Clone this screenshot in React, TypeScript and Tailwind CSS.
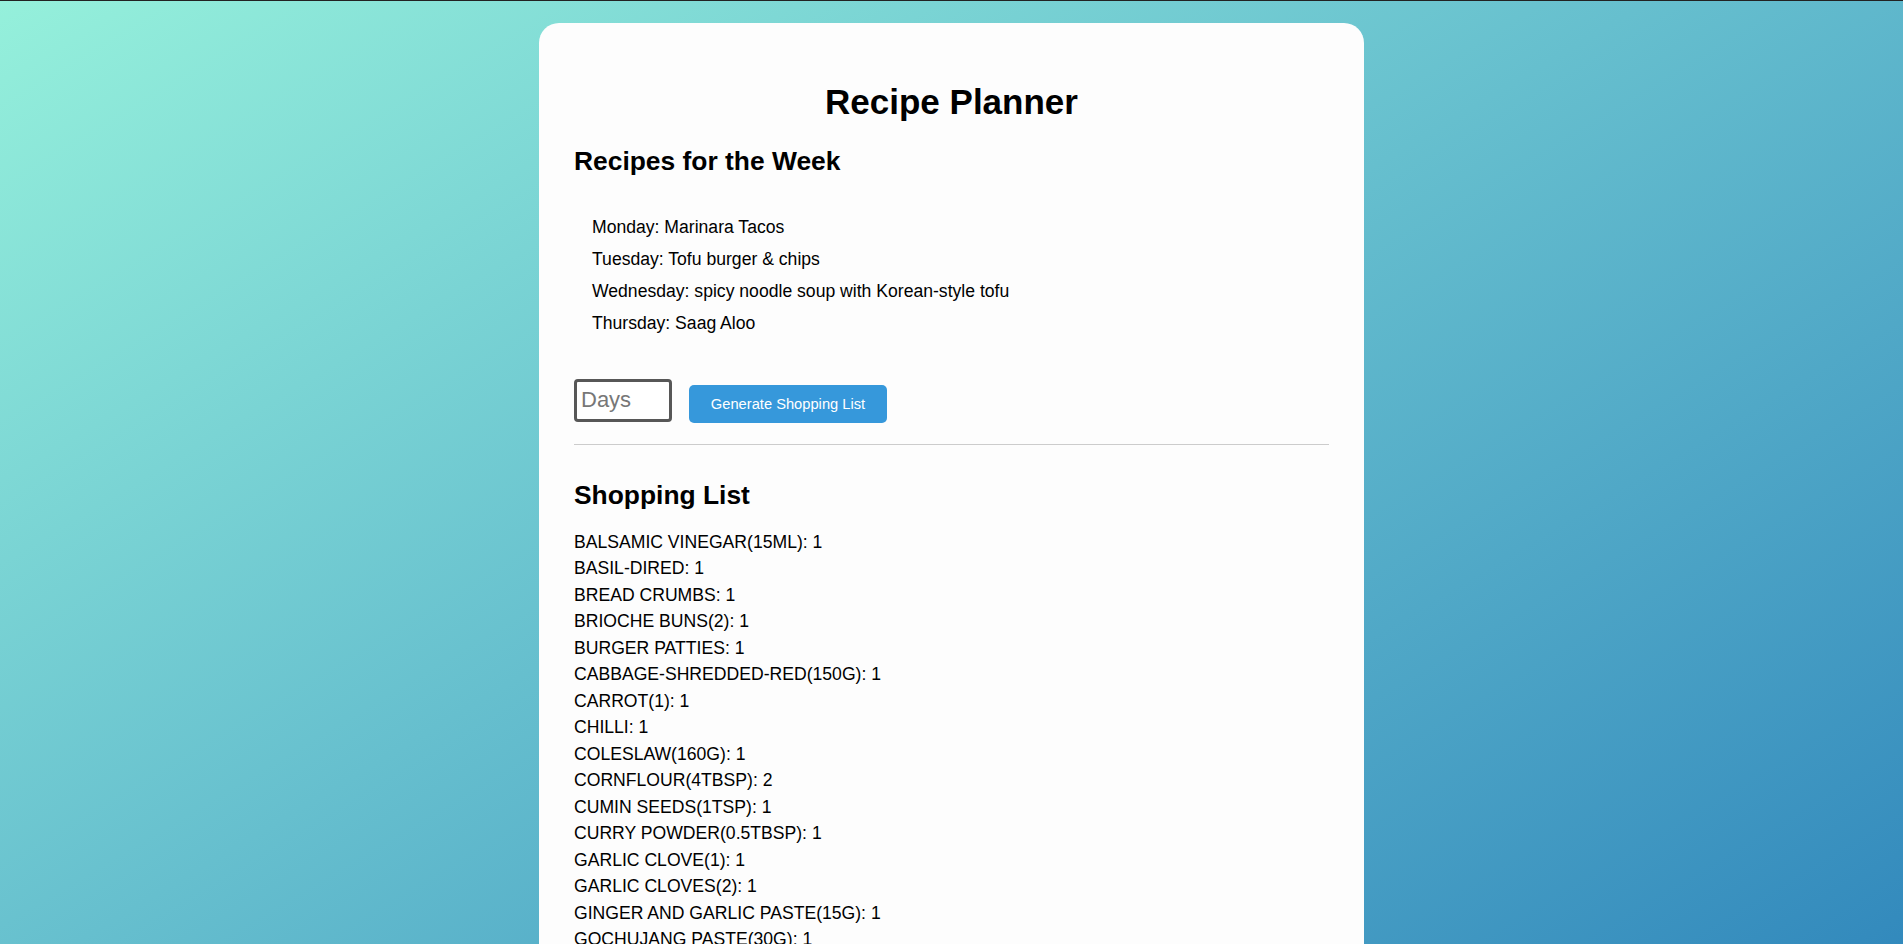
const recipes = [
  "Monday: Marinara Tacos",
  "Tuesday: Tofu burger & chips",
  "Wednesday: spicy noodle soup with Korean-style tofu",
  "Thursday: Saag Aloo",
];

const shopping: [string, number][] = [
  ["balsamic vinegar(15ml)", 1],
  ["basil-dired", 1],
  ["bread crumbs", 1],
  ["brioche buns(2)", 1],
  ["burger patties", 1],
  ["cabbage-shredded-red(150g)", 1],
  ["carrot(1)", 1],
  ["chilli", 1],
  ["coleslaw(160g)", 1],
  ["cornflour(4tbsp)", 2],
  ["cumin seeds(1tsp)", 1],
  ["curry powder(0.5tbsp)", 1],
  ["garlic clove(1)", 1],
  ["garlic cloves(2)", 1],
  ["ginger and garlic paste(15g)", 1],
  ["gochujang paste(30g)", 1],
  ["kale(100g)", 1],
  ["lime(1)", 1],
  ["marinara sauce", 1],
  ["noodles(2 nests)", 1],
];

export default function App() {
  return (
    <div
      className="min-h-[944px] border-t border-[#222] bg-gradient-to-br from-[#95f0db] to-[#2980b9] pt-[22px] pb-10 text-black"
      style={{ fontFamily: '"Liberation Sans", Arial, sans-serif' }}
    >
      <div className="mx-auto w-[825px] rounded-[20px] bg-[#fdfdfd] px-[35px] pt-[59px] pb-10">
        <h1 className="text-center text-[35px] font-bold leading-[1.15]">Recipe Planner</h1>

        <h2 className="mt-[24px] text-[26.4px] font-bold leading-[1.15]">Recipes for the Week</h2>
        <ul className="mt-[34px] pl-[18px] text-[17.6px]">
          {recipes.map((r) => (
            <li key={r} className="leading-[32px]">
              {r}
            </li>
          ))}
        </ul>

        <div className="mt-[40px] flex items-end gap-[17px]">
          <input
            type="number"
            placeholder="Days"
            className="h-[43px] w-[98px] rounded-[4px] border-[3px] border-[#575757] bg-white px-[4px] text-[22px] placeholder:text-[#777] outline-none"
          />
          <button className="mb-[-1px] h-[38px] w-[198px] rounded-[5px] bg-[#3698db] text-[14.7px] text-white">
            Generate Shopping List
          </button>
        </div>

        <hr className="mt-[22px] border-t border-[#ccc]" />

        <h2 className="mt-[35px] text-[26.4px] font-bold leading-[1.15]">Shopping List</h2>
        <div className="mt-[19px] text-[17.6px] uppercase">
          {shopping.map(([name, qty]) => (
            <div key={name} className="leading-[26.5px]">
              {name}: {qty}
            </div>
          ))}
        </div>
      </div>
    </div>
  );
}
